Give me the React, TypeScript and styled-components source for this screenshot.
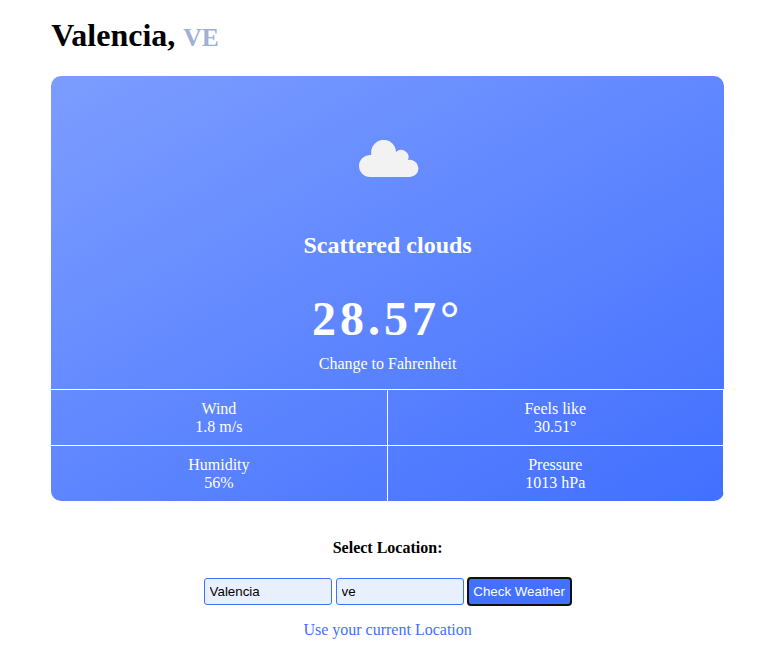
import React from "react";
import styled, { createGlobalStyle } from "styled-components";

const GlobalStyle = createGlobalStyle`
  * { box-sizing: border-box; }
  body { margin: 0; background: #fff; font-family: "Liberation Serif", "Times New Roman", serif; font-size: 16px; color: #000; }
`;
const Page = styled.main`
  width: 672.8px;
  margin: 0 0 0 51.2px;
`;
const City = styled.h1`
  margin: 0;
  padding-top: 17px;
  height: 76px;
  font-size: 32px;
  line-height: 37px;
`;
const Country = styled.span`
  font-size: 25.6px;
  color: #9fb0d6;
`;
const Card = styled.section`
  height: 425px;
  border-radius: 10px;
  background: linear-gradient(150deg, #7c9dff, #4270ff);
  color: #fff;
  text-align: center;
  overflow: hidden;
  display: flex;
  flex-direction: column;
`;
const Summary = styled.div`
  height: 313px;
  display: flex;
  flex-direction: column;
  align-items: center;
`;
const Cloud = styled.svg`
  width: 60px;
  height: 38px;
  margin: 64px 0 0 2.8px;
  fill: #f2f2f2;
`;
const Condition = styled.h2`
  margin: 54px 0 0;
  font-size: 24px;
  line-height: 27px;
`;
const Temperature = styled.div`
  margin-top: 32px;
  font-size: 48px;
  line-height: 55px;
  font-weight: bold;
  letter-spacing: 4px;
`;
const UnitToggle = styled.div`
  margin-top: 9px;
  line-height: 18px;
`;
const Stats = styled.dl`
  margin: 0;
  display: grid;
  grid-template-columns: 1fr 1fr;
  grid-template-rows: 56px 56px;
`;
const Stat = styled.div`
  border-top: 1px solid #fff;
  border-right: 1px solid #fff;
  padding-top: 10px;
  line-height: 18px;
`;
const Term = styled.dt``;
const Value = styled.dd`
  margin: 0;
`;
const LocationForm = styled.form`
  text-align: center;
`;
const FormTitle = styled.h4`
  margin: 38px 0 20px;
  line-height: 18px;
`;
const Fields = styled.div`
  display: flex;
  justify-content: center;
  align-items: center;
  gap: 4px;
`;
const Field = styled.input`
  width: 128px;
  height: 27px;
  padding: 5px;
  border: 1px solid #4270ff;
  border-radius: 3px;
  background: #e8f0fe;
  font: 13.333px "Liberation Sans", Arial, sans-serif;
  color: #000;
`;
const Submit = styled.button`
  width: 105px;
  height: 29px;
  margin-left: -1px;
  padding: 0;
  border: 2px solid #101010;
  border-radius: 4px;
  background: #4270ff;
  color: #fff;
  font: 13.333px "Liberation Sans", Arial, sans-serif;
`;
const CurrentLocation = styled.div`
  margin-top: 15px;
  line-height: 18px;
  color: #4270ff;
`;

const stats = [
  ["Wind", "1.8 m/s"],
  ["Feels like", "30.51°"],
  ["Humidity", "56%"],
  ["Pressure", "1013 hPa"],
];

export default function App() {
  return (
    <Page>
      <GlobalStyle />
      <City>Valencia, <Country>VE</Country></City>
      <Card>
        <Summary>
          <Cloud viewBox="0 0 60 38">
            <path d="M11 37A11 11 0 0 1 0 26A11 11 0 0 1 12.2 15.1V12.5A12.4 12.4 0 0 1 37 12A7.4 7.4 0 0 1 49 20A8.6 8.6 0 1 1 50.5 37Z" />
          </Cloud>
          <Condition>Scattered clouds</Condition>
          <Temperature>28.57°</Temperature>
          <UnitToggle>Change to Fahrenheit</UnitToggle>
        </Summary>
        <Stats>
          {stats.map(([label, value]) => (
            <Stat key={label}><Term>{label}</Term><Value>{value}</Value></Stat>
          ))}
        </Stats>
      </Card>
      <LocationForm onSubmit={(e) => e.preventDefault()}>
        <FormTitle>Select Location:</FormTitle>
        <Fields>
          <Field defaultValue="Valencia" />
          <Field defaultValue="ve" />
          <Submit>Check Weather</Submit>
        </Fields>
        <CurrentLocation>Use your current Location</CurrentLocation>
      </LocationForm>
    </Page>
  );
}
